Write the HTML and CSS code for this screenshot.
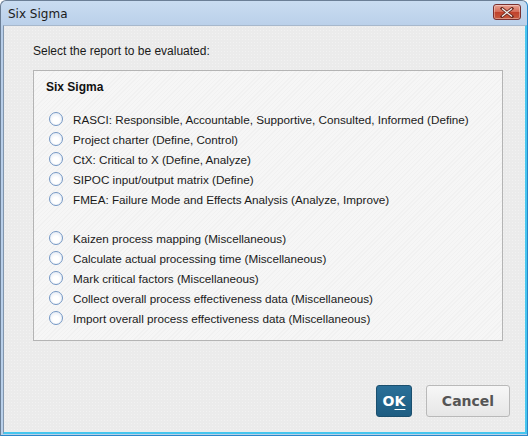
FILE: index.html
```html
<!DOCTYPE html>
<html>
<head>
<meta charset="utf-8">
<link rel="stylesheet" href="styles.css">
</head>
<body>
<div class="window">
  <div class="titlebar">
    <span class="title">Six Sigma</span>
    <button class="close" aria-label="Close">
      <svg width="14" height="11" viewBox="0 0 14 11"><path d="M2 1.5 L12 9.5 M12 1.5 L2 9.5" stroke="#fff" stroke-width="3" stroke-linecap="square"/><path d="M2 1.5 L12 9.5 M12 1.5 L2 9.5" stroke="#f4f4f4" stroke-width="1.2" fill="none"/></svg>
    </button>
  </div>
  <div class="client">
    <p class="prompt">Select the report to be evaluated:</p>
    <div class="group">
      <div class="group-title">Six Sigma</div>
      <div class="options">
        <label class="opt"><span class="radio"></span>RASCI: Responsible, Accountable, Supportive, Consulted, Informed (Define)</label>
        <label class="opt"><span class="radio"></span>Project charter (Define, Control)</label>
        <label class="opt"><span class="radio"></span>CtX: Critical to X (Define, Analyze)</label>
        <label class="opt"><span class="radio"></span>SIPOC input/output matrix (Define)</label>
        <label class="opt"><span class="radio"></span>FMEA: Failure Mode and Effects Analysis (Analyze, Improve)</label>
      </div>
      <div class="options second">
        <label class="opt"><span class="radio"></span>Kaizen process mapping (Miscellaneous)</label>
        <label class="opt"><span class="radio"></span>Calculate actual processing time (Miscellaneous)</label>
        <label class="opt"><span class="radio"></span>Mark critical factors (Miscellaneous)</label>
        <label class="opt"><span class="radio"></span>Collect overall process effectiveness data (Miscellaneous)</label>
        <label class="opt"><span class="radio"></span>Import overall process effectiveness data (Miscellaneous)</label>
      </div>
    </div>
    <div class="buttons">
      <button class="btn ok">O<u>K</u></button>
      <button class="btn cancel">Cancel</button>
    </div>
  </div>
</div>
</body>
</html>
```
FILE: styles.css
```css
html, body {
  margin: 0;
  padding: 0;
  background: #fff;
}
.window {
  width: 528px;
  height: 436px;
  box-sizing: border-box;
  border: 1px solid #6b7f96;
  border-bottom-color: #2a86c8;
  border-right-color: #2a86c8;
  border-radius: 6px 6px 0 0;
  background: linear-gradient(#c9dcf1, #b7cde8 30px, #b9d0ea);
  display: flex;
  flex-direction: column;
  font-family: "Liberation Sans", Arial, sans-serif;
}
.titlebar {
  height: 24px;
  display: flex;
  align-items: center;
  justify-content: space-between;
  padding: 0 6px 0 7px;
}
.title {
  font-family: "DejaVu Sans", sans-serif;
  font-size: 12px;
  color: #1b1b1b;
  margin-top: 1px;
}
.close {
  width: 28px;
  height: 16px;
  padding: 0;
  margin-top: -2px;
  border: 1px solid #7a3030;
  border-radius: 3px;
  background: linear-gradient(#e8a293, #d46a56 50%, #c0412c 52%, #c75a3f);
  display: flex;
  align-items: center;
  justify-content: center;
  box-shadow: inset 0 0 0 1px rgba(255,255,255,0.35);
}
.close svg path:first-child { stroke: #6b2a20; }
.client {
  flex: 1;
  margin: 0 0 1px 2px;
  border-left: 1px solid #8296ad;
  border-top: 1px solid #a7b8cc;
  border-bottom: 2px solid #46c6ee;
  border-right: 2px solid #46c6ee;
  background-color: #ebebeb;
  background-image: radial-gradient(circle, #f2f2f2 0.6px, transparent 0.8px);
  background-size: 3px 3px;
  display: flex;
  flex-direction: column;
  padding: 0 22px 0 29px;
}
.prompt {
  margin: 18px 0 0 0;
  font-size: 12px;
  color: #1a1a1a;
  line-height: 14px;
}
.group {
  margin-top: 12px;
  height: 271px;
  box-sizing: border-box;
  border: 1px solid #b4b4b4;
  background: repeating-linear-gradient(135deg, #f6f6f6 0 2px, #f1f1f1 2px 3px);
  padding: 8px 0 0 12px;
}
.group-title {
  font-weight: bold;
  font-size: 12px;
  color: #111;
  line-height: 16px;
}
.options {
  margin-top: 14px;
  display: flex;
  flex-direction: column;
}
.options.second {
  margin-top: 19px;
}
.opt {
  display: flex;
  align-items: center;
  height: 20px;
  font-size: 11.7px;
  color: #1a1a1a;
  white-space: nowrap;
}
.radio {
  width: 12px;
  height: 12px;
  border: 1px solid #7497c4;
  border-radius: 50%;
  background: radial-gradient(circle at 50% 60%, #ffffff 0 3px, #eef2f8 6px);
  margin: 0 10px 0 3px;
  flex: none;
}
.buttons {
  margin-top: auto;
  margin-bottom: 15px;
  display: flex;
  justify-content: flex-end;
  gap: 14px;
  margin-right: -7px;
}
.btn {
  height: 32px;
  border-radius: 3px;
  font-family: "DejaVu Sans", sans-serif;
  font-weight: bold;
  font-size: 14px;
  padding: 0;
}
.ok {
  width: 36px;
  border: 1px solid #1b4f6e;
  background: linear-gradient(#2a6f98, #1e5d82);
  color: #fff;
}
.ok u {
  text-underline-offset: 3px;
}
.cancel {
  width: 84px;
  border: 1px solid #b9b9b9;
  background: linear-gradient(#f7f7f7, #e6e6e6);
  color: #555;
}
```
